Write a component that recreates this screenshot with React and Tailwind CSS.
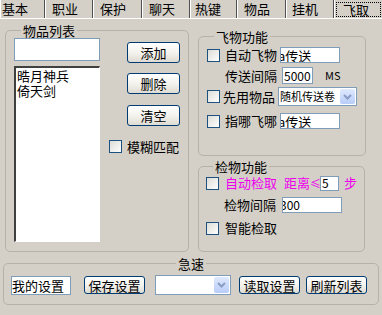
import React from 'react';

const tabs = [
    { label: '基本', w: 'w-[45px]', pl: 'pl-[1px]' },
    { label: '职业', w: 'w-[48px]', pl: 'pl-[6px]' },
    { label: '保护', w: 'w-[49px]', pl: 'pl-[6px]' },
    { label: '聊天', w: 'w-[48px]', pl: 'pl-[6px]' },
    { label: '热键', w: 'w-[47px]', pl: 'pl-[4px]' },
    { label: '物品', w: 'w-[49px]', pl: 'pl-[6px]' },
    { label: '挂机', w: 'w-[48px]', pl: 'pl-[5px]' },
];

function Checkbox() {
    return <span className="block w-[13px] h-[13px] shrink-0 border border-[#1c5180] bg-linear-to-br from-[#dcdcd7] to-white" />;
}

function Button({ children, className }) {
    return (
        <div className={`flex items-center justify-center rounded-[3px] border border-[#003c74] bg-linear-to-b from-white via-[#f4f3ee] to-[#dedbd2] leading-none whitespace-nowrap ${className}`}>
            {children}
        </div>
    );
}

function TextBox({ children, className, indent = '' }) {
    return (
        <div className={`flex items-center shrink-0 overflow-hidden border border-[#7f9db9] bg-white whitespace-nowrap leading-none ${className}`}>
            <span className={indent}>{children}</span>
        </div>
    );
}

function Combo({ children, className }) {
    return (
        <div className={`flex items-center shrink-0 border border-[#7f9db9] bg-white p-[1px] leading-none ${className}`}>
            <span className="flex-1 min-w-0 whitespace-nowrap text-[11px]">{children}</span>
            <span className="flex h-full w-[15px] shrink-0 items-center justify-center rounded-[2px] bg-linear-to-b from-[#dfe9fe] to-[#b9cdf8]">
                <svg width="9" height="6" viewBox="0 0 9 6">
                    <path d="M1 1 L4.5 4.5 L8 1" fill="none" stroke="#8a9dc4" strokeWidth="2" />
                </svg>
            </span>
        </div>
    );
}

function Group({ title, className, center, children }) {
    return (
        <fieldset className={`rounded-[5px] border border-[#b5b2a8] ${className}`}>
            <legend className={`px-[2px] leading-[15px] ${center ? 'mx-auto' : 'ml-[7px]'}`}>{title}</legend>
            {children}
        </fieldset>
    );
}

export default function App() {
    return (
        <div className="w-[382px] h-[315px] overflow-hidden bg-[#d4d0c8] text-[13px] text-black font-['Noto_Sans_CJK_SC','Noto_Sans',sans-serif]">
            {/* tab strip */}
            <div className="flex h-[19px] border-b border-white">
                {tabs.map(t => (
                    <div key={t.label} className={`${t.w} ${t.pl} h-[18px] leading-[18px] border-l border-white border-r border-r-[#505050]`}>
                        {t.label}
                    </div>
                ))}
                <div className="w-[48px] h-[18px] pl-[1px] pt-[2px] border-l border-white">
                    <div className="w-[45px] h-[15px] border border-dotted border-black pl-[6px] leading-[13px]">飞取</div>
                </div>
            </div>

            <div className="flex">
                {/* 物品列表 */}
                <Group title="物品列表" className="ml-[5px] mt-[4px] w-[183px] h-[229px] px-[8px]">
                    <div className="flex">
                        <div className="flex flex-col w-[86px]">
                            <TextBox className="h-[23px]" />
                            <div className="mt-[5px] h-[176px] border-t-2 border-l-2 border-t-[#404040] border-l-[#404040] border-r border-b border-r-white border-b-white bg-white pl-[1px] leading-[15px]">
                                <div>晧月神兵</div>
                                <div>倚天剑</div>
                            </div>
                        </div>
                        <div className="flex flex-col ml-[9px]">
                            <Button className="ml-[18px] mt-[4px] w-[53px] h-[21px]">添加</Button>
                            <Button className="ml-[18px] mt-[10px] w-[53px] h-[21px]">删除</Button>
                            <Button className="ml-[18px] mt-[11px] w-[53px] h-[21px]">清空</Button>
                            <div className="flex items-center mt-[11px]">
                                <Checkbox />
                                <span className="ml-[5px] whitespace-nowrap">模糊匹配</span>
                            </div>
                        </div>
                    </div>
                </Group>

                <div className="flex flex-col ml-[9px] mt-[10px] w-[166px]">
                    {/* 飞物功能 */}
                    <Group title="飞物功能" className="h-[127px] px-[8px]">
                        <div className="flex items-center mt-[3px] h-[16px]">
                            <Checkbox />
                            <span className="ml-[5px] w-[55px] shrink-0 whitespace-nowrap">自动飞物</span>
                            <TextBox className="w-[60px] h-[16px]" indent="-ml-[3px]">a传送</TextBox>
                        </div>
                        <div className="flex items-center mt-[4px] h-[17px]">
                            <span className="ml-[18px] w-[57px] shrink-0 whitespace-nowrap">传送间隔</span>
                            <TextBox className="w-[31px] h-[17px] text-[12px]" indent="pl-[1px]">5000</TextBox>
                            <span className="ml-[12px] text-[11px]">MS</span>
                        </div>
                        <div className="flex items-center mt-[3px] h-[19px]">
                            <Checkbox />
                            <span className="ml-[3px] w-[55px] shrink-0 whitespace-nowrap">先用物品</span>
                            <Combo className="w-[79px] h-[19px]">随机传送卷</Combo>
                        </div>
                        <div className="flex items-center mt-[7px] h-[16px]">
                            <Checkbox />
                            <span className="ml-[5px] w-[55px] shrink-0 whitespace-nowrap">指哪飞哪</span>
                            <TextBox className="w-[60px] h-[16px]" indent="-ml-[3px]">a传送</TextBox>
                        </div>
                    </Group>

                    {/* 检物功能 */}
                    <Group title="检物功能" className="mt-[3px] h-[93px] px-[7px]">
                        <div className="flex items-center mt-[1px] h-[16px] text-[#ee00ee] whitespace-nowrap">
                            <Checkbox />
                            <span className="ml-[6px] w-[59px] shrink-0">自动检取</span>
                            <span className="w-[36px] shrink-0">距离<span className="text-[11px]">≤</span></span>
                            <TextBox className="w-[19px] h-[15px] text-black text-[12px]" indent="pl-[1px]">5</TextBox>
                            <span className="ml-[5px]">步</span>
                        </div>
                        <div className="flex items-center mt-[5px] h-[17px]">
                            <span className="ml-[18px] w-[58px] shrink-0 whitespace-nowrap">检物间隔</span>
                            <TextBox className="w-[60px] h-[16px] text-[12px]" indent="-ml-[3px]">300</TextBox>
                        </div>
                        <div className="flex items-center mt-[7px] h-[16px]">
                            <Checkbox />
                            <span className="ml-[6px] whitespace-nowrap">智能检取</span>
                        </div>
                    </Group>
                </div>
            </div>

            {/* 急速 */}
            <Group title="急速" center className="ml-[3px] mt-[4px] w-[376px] h-[49px] px-[7px]">
                <div className="flex items-center mt-[4px] h-[20px]">
                    <TextBox className="w-[60px] h-[19px]">我的设置</TextBox>
                    <Button className="ml-[13px] w-[61px] h-[18px]">保存设置</Button>
                    <Combo className="ml-[10px] w-[76px] h-[20px]" />
                    <Button className="ml-[8px] w-[61px] h-[18px]">读取设置</Button>
                    <Button className="ml-[6px] w-[61px] h-[18px]">刷新列表</Button>
                </div>
            </Group>
        </div>
    );
}
